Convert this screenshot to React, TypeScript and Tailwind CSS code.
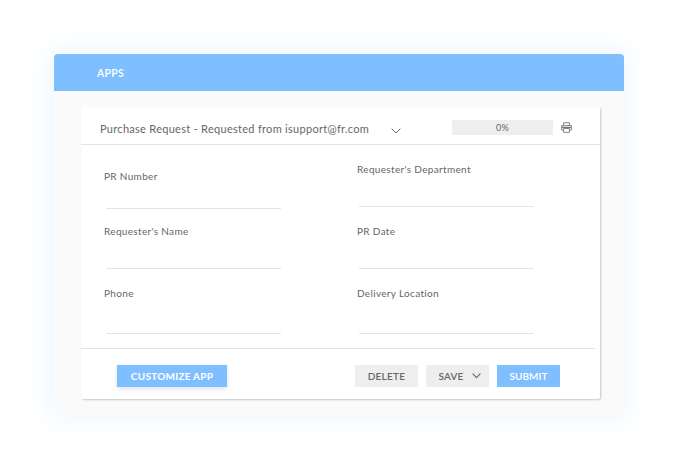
const font = { fontFamily: '"Lato", "Open Sans", sans-serif' };

function Field({ label, gap, top }: { label: string; gap: string; top: string }) {
  return (
    <div className={top}>
      <div className="h-[14px] text-[10px] leading-[14px] tracking-[0.33px] text-[#666666]">{label}</div>
      <div className={`${gap} ml-[2px] h-px w-[175px] bg-[#e3e3e3]`} />
    </div>
  );
}

export default function App() {
  return (
    <div className="h-[468px] w-[678px] bg-white pl-[54px] pt-[54px]" style={font}>
      <div className="h-[360px] w-[570px] rounded-t-[4px] bg-[#fafafa] shadow-[0_0_24px_5px_rgba(130,190,255,0.13)]">
        <div className="flex h-[37px] items-center rounded-t-[4px] bg-[#80bfff] pl-[43px] pt-[3px] text-[10.5px] font-semibold tracking-[0.3px] text-white">
          APPS
        </div>
        <div className="ml-[27px] mt-[16px] h-[292px] w-[519px] rounded-[2px] bg-white shadow-[1px_1px_2px_rgba(0,0,0,0.2)]">
          <div className="flex h-[38px] items-center border-b border-[#e3e3e3] pl-[19px]">
            <span className="mt-[8px] w-[285px] whitespace-nowrap text-[11px] tracking-[0.29px] text-[#666666]">
              Purchase Request - Requested from isupport@fr.com
            </span>
            <svg width="10" height="6" viewBox="0 0 10 6" className="ml-[6px] mt-[10px]" fill="none" stroke="#666666" strokeWidth="1">
              <path d="M0.7 0.7 L5 5 L9.3 0.7" />
            </svg>
            <div className="ml-[51px] mt-[4px] flex h-[15px] w-[101px] items-center justify-center bg-[#eeeeee] text-[9px] tracking-[0.3px] text-[#666666]">
              0%
            </div>
            <svg width="11" height="11" viewBox="0 0 11 11" className="ml-[8px] mt-[3px]" fill="none" stroke="#777777" strokeWidth="0.9">
              <path d="M2.5 3.5 V0.8 H8.5 V3.5" />
              <path d="M2.5 8 H0.6 V3.6 H10.4 V8 H8.5" />
              <path d="M2.5 6.5 H8.5 V10.3 H2.5 Z" />
              <path d="M1 4.8 H10 V6 H1 Z" fill="#777777" stroke="none" />
            </svg>
          </div>
          <div className="mr-[5px] flex h-[204px] border-b border-[#e3e3e3]">
            <div className="w-[253px] pl-[23px]">
              <Field label="PR Number" top="pt-[24px]" gap="mt-[25px]" />
              <Field label="Requester's Name" top="mt-[15px]" gap="mt-[30px]" />
              <Field label="Phone" top="mt-[17px]" gap="mt-[33px]" />
            </div>
            <div className="pl-[23px]">
              <Field label="Requester's Department" top="pt-[17px]" gap="mt-[30px]" />
              <Field label="PR Date" top="mt-[17px]" gap="mt-[30px]" />
              <Field label="Delivery Location" top="mt-[17px]" gap="mt-[33px]" />
            </div>
          </div>
          <div className="flex pl-[36px] pt-[16px] text-[10px] font-semibold tracking-[0.25px]">
            <div className="flex h-[22px] w-[110px] items-center justify-center bg-[#80bfff] font-bold text-white shadow-[0_2px_5px_rgba(0,0,0,0.12)]">
              CUSTOMIZE APP
            </div>
            <div className="ml-[128px] flex h-[22px] w-[63px] items-center justify-center rounded-[1px] bg-[#eeeeee] text-[#666666]">
              DELETE
            </div>
            <div className="ml-[8px] flex h-[22px] w-[63px] items-center justify-center gap-[8px] rounded-[1px] bg-[#eeeeee] pl-[4px] text-[#666666]">
              SAVE
              <svg width="9" height="6" viewBox="0 0 9 6" fill="none" stroke="#666666" strokeWidth="1.1">
                <path d="M0.6 0.7 L4.5 4.6 L8.4 0.7" />
              </svg>
            </div>
            <div className="ml-[8px] flex h-[22px] w-[63px] items-center justify-center bg-[#80bfff] tracking-[0.1px] text-white">
              SUBMIT
            </div>
          </div>
        </div>
      </div>
    </div>
  );
}
